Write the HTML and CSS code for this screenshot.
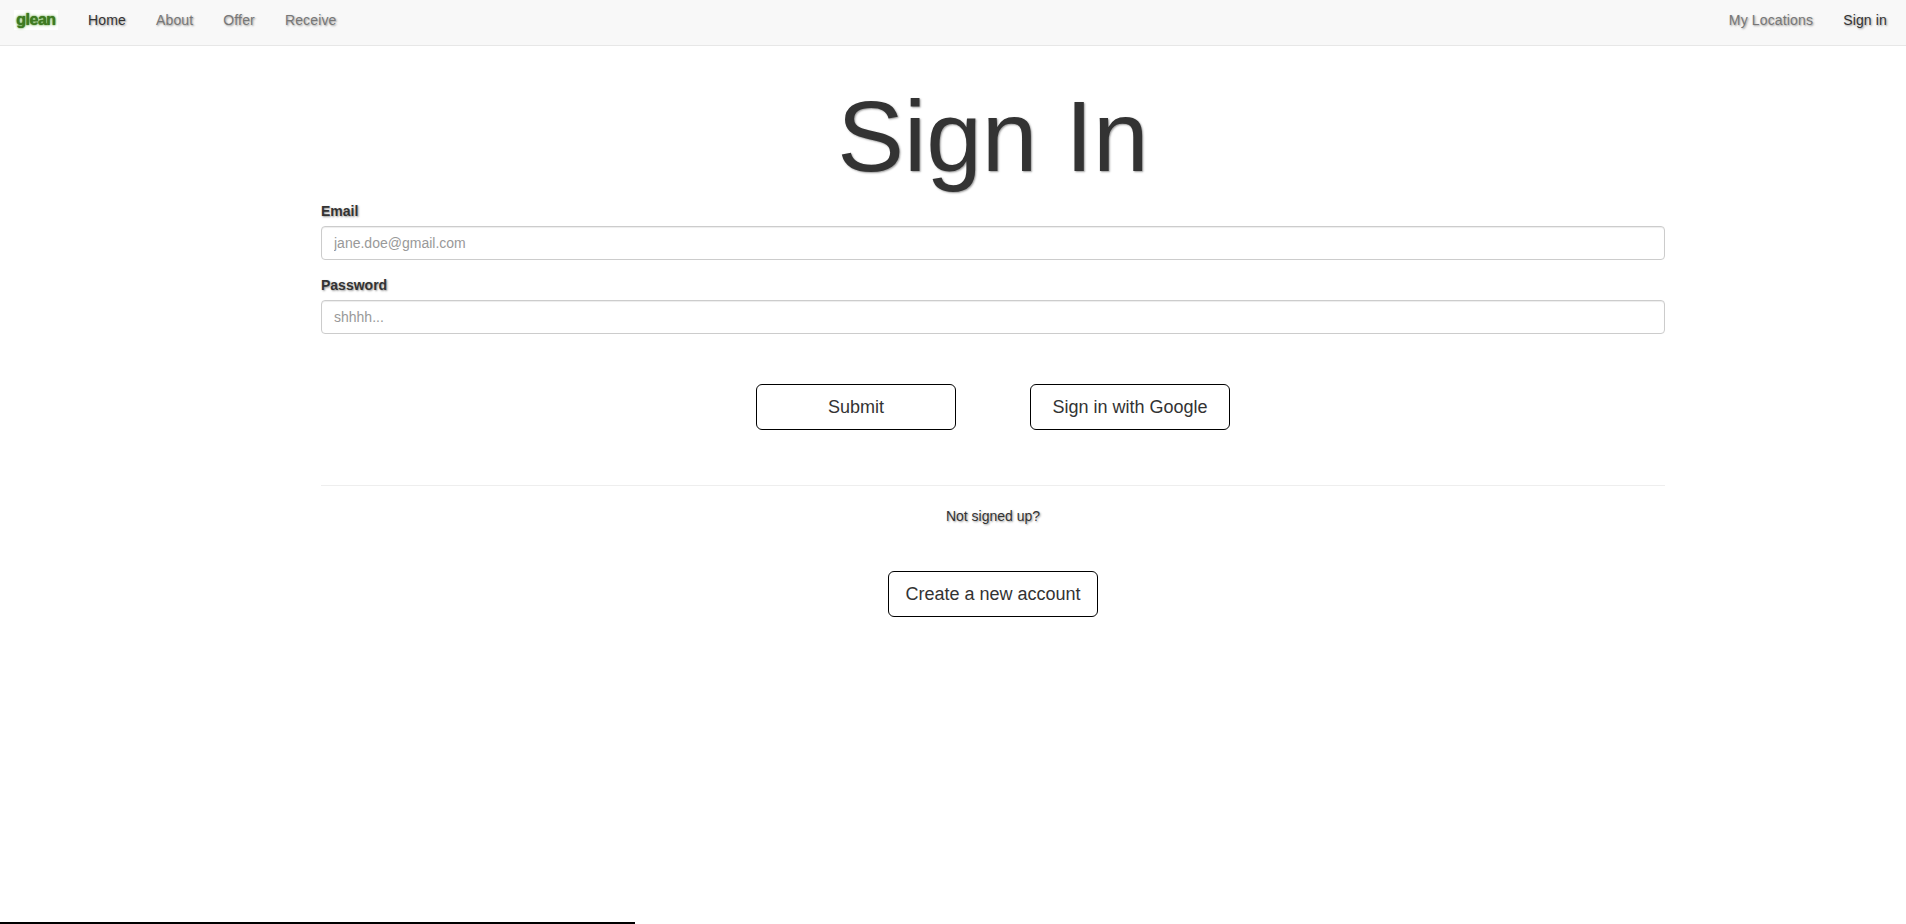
FILE: index.html
```html
<!DOCTYPE html>
<html lang="en">
<head>
<meta charset="utf-8">
<title>Sign In</title>
<link rel="stylesheet" href="styles.css">
</head>
<body>
<nav class="navbar">
  <a class="brand" href="#">glean</a>
  <ul class="nav-list">
    <li><a class="nav-link active" href="#">Home</a></li>
    <li><a class="nav-link" href="#">About</a></li>
    <li><a class="nav-link" href="#">Offer</a></li>
    <li><a class="nav-link" href="#">Receive</a></li>
  </ul>
  <ul class="nav-list nav-right">
    <li><a class="nav-link" href="#">My Locations</a></li>
    <li><a class="nav-link active" href="#">Sign in</a></li>
  </ul>
</nav>
<main class="content">
  <h1 class="title">Sign In</h1>
  <form class="form">
    <div class="field">
      <label class="label" for="email">Email</label>
      <input class="input" id="email" type="text" placeholder="jane.doe@gmail.com">
    </div>
    <div class="field">
      <label class="label" for="password">Password</label>
      <input class="input" id="password" type="password" placeholder="shhhh...">
    </div>
    <div class="actions">
      <button class="btn btn-wide" type="button">Submit</button>
      <button class="btn btn-wide" type="button">Sign in with Google</button>
    </div>
  </form>
  <hr class="rule">
  <p class="note">Not signed up?</p>
  <div class="signup">
    <button class="btn" type="button">Create a new account</button>
  </div>
</main>
<div class="progress"></div>
</body>
</html>
```
FILE: styles.css
```css
* { box-sizing: border-box; }
html, body { height: 100%; }
body {
  margin: 0;
  display: flex;
  flex-direction: column;
  overflow: hidden;
  background: #fff;
  color: #333;
  font-family: "Liberation Sans", Arial, sans-serif;
  font-size: 14px;
  line-height: 20px;
  text-shadow: 1px 1px 2px #999;
}
.navbar {
  display: flex;
  align-items: flex-start;
  flex: none;
  height: 46px;
  padding: 10px 4px 0 14px;
  background: #f8f8f8;
  border-bottom: 1px solid #e7e7e7;
}
.brand {
  display: block;
  width: 44px;
  height: 20px;
  margin-right: 15px;
  background: #fff;
  color: #3f7a22;
  font-size: 16px;
  font-weight: 700;
  letter-spacing: -0.5px;
  line-height: 19px;
  text-align: center;
  text-decoration: none;
  text-shadow: 0 0 1px #3f7a22, 0 0 3px #5aa238;
}
.nav-list {
  display: flex;
  margin: 0;
  padding: 0;
  list-style: none;
}
.nav-right { margin-left: auto; }
.nav-link {
  display: block;
  padding: 0 15px;
  color: #777;
  letter-spacing: 0.15px;
  text-decoration: none;
}
.nav-link.active { color: #333; }
.content {
  flex: none;
  width: 1344px;
  margin-left: 321px;
}
.title {
  margin: 35px 0 10px;
  font-size: 100px;
  font-weight: 400;
  line-height: 110px;
  text-align: center;
}
.form { display: block; }
.field { margin-bottom: 15px; }
.label {
  display: block;
  margin-bottom: 5px;
  font-weight: 700;
}
.input {
  display: block;
  width: 100%;
  height: 34px;
  padding: 6px 12px;
  background: #fff;
  border: 1px solid #ccc;
  border-radius: 4px;
  box-shadow: inset 0 1px 1px rgba(0, 0, 0, 0.075);
  color: #555;
  font: 14px/20px "Liberation Sans", Arial, sans-serif;
}
.input::placeholder { color: #999; opacity: 1; }
.actions {
  display: flex;
  justify-content: center;
  gap: 74px;
  margin-top: 50px;
}
.btn {
  height: 46px;
  padding: 10px 16px;
  background: #fff;
  border: 1px solid #000;
  border-radius: 6px;
  color: #333;
  font: 18px/24px "Liberation Sans", Arial, sans-serif;
}
.btn-wide { width: 200px; }
.rule {
  height: 0;
  margin: 55px 0 20px;
  border: 0;
  border-top: 1px solid #eee;
}
.note {
  margin: 0;
  text-align: center;
}
.signup {
  display: flex;
  justify-content: center;
  margin-top: 45px;
}
.progress {
  flex: none;
  width: 635px;
  height: 2px;
  margin-top: auto;
  background: #000;
}
```
